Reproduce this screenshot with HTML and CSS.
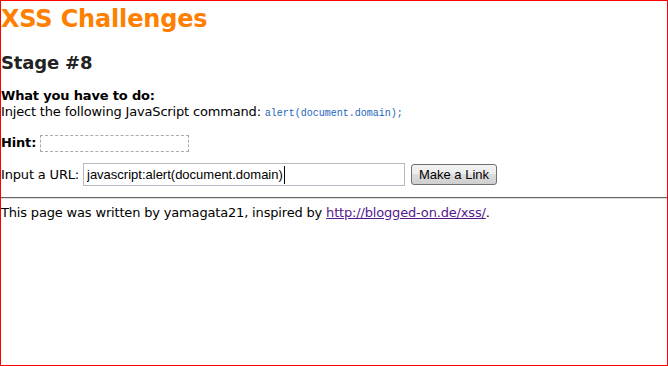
FILE: index.html
```html
<!DOCTYPE html>
<html lang="en">
<head>
  <meta charset="UTF-8" />
  <title>XSS Challenges - Stage #8</title>
  <link rel="stylesheet" href="styles.css">
</head>
<body>

  <h1>XSS Challenges</h1>
  <h2>Stage #8</h2>

  <form class="stage-form" onsubmit="return false;">
    <p class="task">
      <b>What you have to do:</b><br>
      Inject the following JavaScript command: <code>alert(document.domain);</code>
    </p>
    <p class="hint-row">
      <b>Hint:</b> <span class="hint"></span>
    </p>
    <p class="url-row">
      Input a URL:
      <span class="field">
        <input type="text" name="p1" value="javascript:alert(document.domain)">
        <span class="caret"></span>
      </span>
      <input type="submit" class="btn" value="Make a Link">
    </p>
  </form>

  <hr>

  <p class="footer">This page was written by yamagata21, inspired by <a href="#">http://blogged-on.de/xss/</a>.</p>

</body>
</html>
```

FILE: styles.css
```css
html {
  background: #fff;
}
body {
  margin: 0;
  height: 366px;
  box-sizing: border-box;
  border: 1px solid #f00;
  font-family: "DejaVu Sans", Verdana, sans-serif;
  font-size: 13px;
  line-height: 16px;
  letter-spacing: -0.17px;
  color: #000;
}
h1 {
  margin: 4px 0 0;
  font-size: 24px;
  line-height: 28px;
  color: #ff8000;
}
h2 {
  margin: 19px 0 0;
  font-size: 18px;
  line-height: 21px;
  color: #222;
}
p {
  margin: 0;
}
.task {
  margin-top: 15px;
}
code {
  font-family: "Liberation Mono", monospace;
  font-size: 10px;
  letter-spacing: 0;
  color: #2266bb;
}
.hint-row {
  margin-top: 13px;
}
.hint {
  display: inline-block;
  vertical-align: middle;
  width: 147px;
  height: 15px;
  border: 1px dashed #aaa;
}
.url-row {
  margin-top: 11px;
}
.field {
  position: relative;
  display: inline-block;
}
.field input {
  width: 322px;
  height: 23px;
  box-sizing: border-box;
  padding: 1px 3px;
  margin: 0 2px 0 0;
  border: 1px solid #b5b9c2;
  font-family: "Liberation Sans", Tahoma, sans-serif;
  font-size: 13px;
  letter-spacing: 0;
  color: #000;
}
.caret {
  position: absolute;
  left: 201px;
  top: 3px;
  width: 1px;
  height: 18px;
  background: #000;
}
.btn {
  height: 21px;
  padding: 0 7px;
  margin: 0;
  border: 1px solid #707070;
  border-radius: 3px;
  background: linear-gradient(#f2f2f2, #ebebeb 50%, #dddddd 50%, #cfcfcf);
  font-family: "Liberation Sans", Tahoma, sans-serif;
  font-size: 13px;
  letter-spacing: 0;
  color: #000;
}
hr {
  margin: 11px 0 0;
  border: 0;
  border-top: 1px solid #666;
  border-bottom: 1px solid #ddd;
}
.footer {
  margin-top: 6px;
}
a {
  color: #551a8b;
}
```
